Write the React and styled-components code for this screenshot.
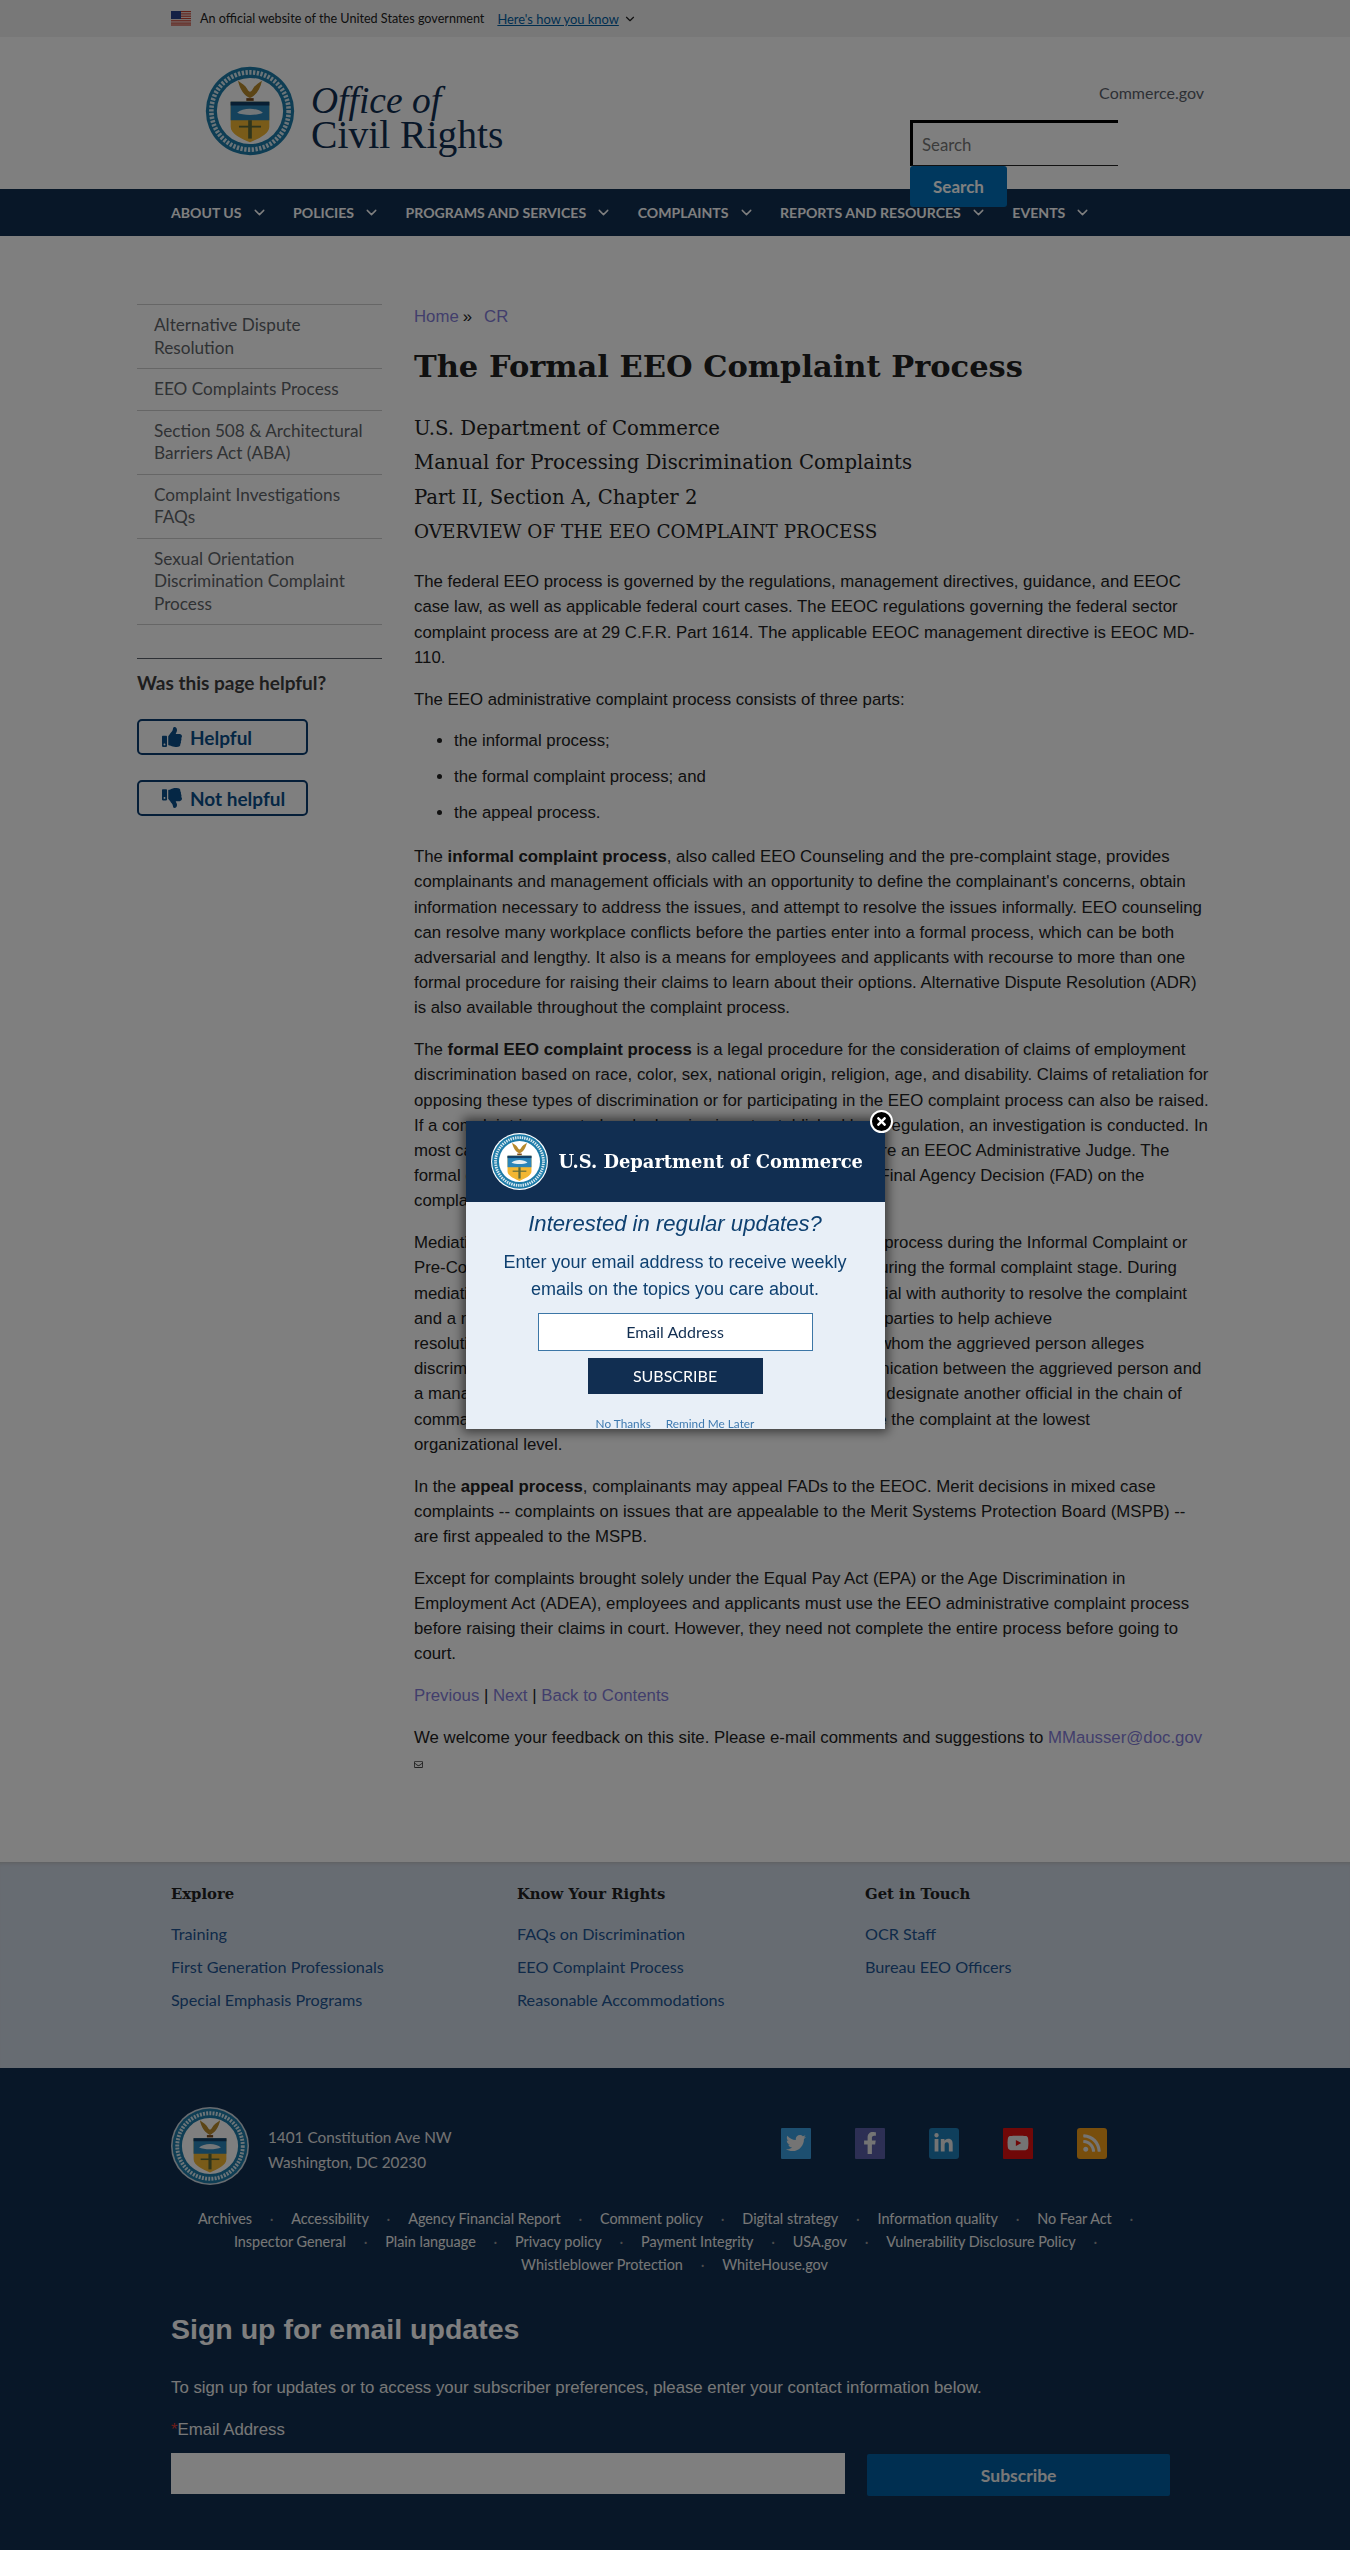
import React from "react";
import styled, { createGlobalStyle } from "styled-components";
import { ChevronDown } from "lucide-react";
import { FaThumbsUp, FaThumbsDown, FaTwitter, FaFacebookF, FaLinkedinIn, FaYoutube, FaRss, FaTimes, FaRegEnvelope } from "react-icons/fa";

const SANS = `Lato, "Noto Sans", sans-serif`;
const SERIF = `"DejaVu Serif", "Liberation Serif", serif`;
const BODY = `"Liberation Sans", Arial, sans-serif`;

const Global = createGlobalStyle`
  html, body { margin: 0; padding: 0; background: #fff; }
  * { box-sizing: border-box; }
  a { text-decoration: none; color: inherit; }
`;

const Page = styled.div`position: relative; width: 1350px; font-family: ${BODY}; color: #212121;`;

const GovBanner = styled.div`
  height: 37px; background: #f1f1f1; padding-left: 171px;
  display: flex; align-items: center; font-family: ${SANS}; font-size: 12.6px; color: #212121;
`;
const BannerText = styled.span`margin-left: 9px;`;
const BannerLink = styled.a`margin-left: 13px; font-size: 12.9px; color: #005ea2; text-decoration: underline;`;
const BannerChevron = styled(ChevronDown)`margin-left: 4px; color: #212121;`;

const Header = styled.header`height: 152px; background: #fff; display: flex; justify-content: space-between; padding: 28px 146px 0 204px;`;
const Logo = styled.div`display: flex; align-items: center; gap: 15px; height: 92px;`;
const LogoText = styled.div`font-family: "Liberation Serif", serif; color: #112e51; font-size: 39.6px; line-height: 34px; padding-top: 14px;`;
const LogoOffice = styled.div`font-style: italic; font-size: 37.5px;`;
const HeaderRight = styled.div`width: 294px; display: flex; flex-direction: column; position: relative; z-index: 2;`;
const CommerceLink = styled.a`flex: none; align-self: flex-end; font-family: ${SANS}; font-size: 16px; color: #5b616b; line-height: 20px; margin-top: 18px;`;
const SearchInput = styled.div`
  flex: none; width: 208px; height: 46px; margin-top: 17px; border-top: 3px solid #000; border-left: 3px solid #000; border-bottom: 1px solid #222;
  padding-left: 9px; display: flex; align-items: center; font-family: ${SANS}; font-size: 16.8px; color: #777;
`;
const SearchButton = styled.button`
  flex: none; width: 97px; height: 41px; border: 0; border-radius: 3px; background: #0071bc; color: #fff;
  font-family: ${SANS}; font-weight: 700; font-size: 17px; padding: 0;
`;

const Nav = styled.nav`height: 47px; background: #112e51; display: flex; align-items: center; padding-left: 171px;`;
const NavItem = styled.a`
  display: flex; align-items: center; margin-right: 25.5px; font-family: ${SANS}; font-weight: 700; font-size: 14.1px; color: #fff;
  svg { margin-left: 9px; }
`;

const Main = styled.main`display: flex; gap: 32px; padding: 68px 140px 0 137px; background: #fff; height: 1626px;`;
const Sidebar = styled.aside`width: 245px; flex: none;`;
const SideList = styled.ul`list-style: none; margin: 0; padding: 0; border-top: 1px solid #ccc;`;
const SideItem = styled.li`
  border-bottom: 1px solid #ccc; padding: 9px 16px 9px 17px; font-family: ${SANS}; font-size: 17.2px; line-height: 22.5px; color: #5f6469;
`;
const Helpful = styled.div`margin-top: 33px; border-top: 1px solid #5b616b; padding-top: 11px;`;
const HelpfulTitle = styled.div`font-family: ${SANS}; font-weight: 700; font-size: 19px; line-height: 26px; color: #3d3d3d;`;
const HelpButton = styled.button`
  display: flex; align-items: center; gap: 8px; width: 171px; height: 36px; margin-top: ${p => p.$top}px; padding: 0 0 0 23px;
  background: #fff; border: 2px solid #0b3d70; border-radius: 5px; color: #0b4f8a;
  font-family: ${SANS}; font-weight: 700; font-size: 19px;
`;

const Content = styled.div`width: 796px; flex: none;`;
const Crumbs = styled.div`font-size: 16.8px; line-height: 24px; padding-top: 1px; color: #212121;`;
const Link = styled.a`color: #847dd8;`;
const CrumbSep = styled.span`margin: 0 12px 0 4px;`;
const Title = styled.h1`font-family: ${SERIF}; font-weight: 700; font-size: 30.5px; line-height: 46px; margin: 14px 0 23px; color: #212121;`;
const Sub = styled.div`font-family: ${SERIF}; font-size: ${p => p.$size || 19.7}px; line-height: 34.3px; color: #212121;`;
const SubGroup = styled.div`margin-bottom: 20px;`;
const P = styled.p`font-size: 16.8px; line-height: 25.2px; margin: 0 0 16.6px;`;
const UL = styled.ul`margin: 0 0 19px; padding: 0 0 0 40px;`;
const LI = styled.li`font-size: 16.8px; line-height: 25.2px; margin-bottom: 10.6px;`;
const MailMark = styled(FaRegEnvelope)`display: block; margin-top: -7px; color: #444;`;

const FooterTop = styled.div`height: 206px; background: #cfd9e5; padding: 20px 0 0 171px; display: grid; grid-template-columns: 346px 348px 1fr; box-shadow: inset 0 4px 4px -3px #bbb;`;
const FootHead = styled.div`font-family: ${SERIF}; font-weight: 700; font-size: 14.8px; line-height: 24px; color: #212121; margin-bottom: 11px;`;
const FootLink = styled.a`display: block; font-family: ${SANS}; font-size: 16.2px; line-height: 33.2px; color: #205493;`;

const FooterDark = styled.footer`height: 482px; background: #112e51; padding: 39px 180px 0 171px; color: #f1f1f1;`;
const ContactRow = styled.div`display: flex; align-items: center;`;
const Address = styled.div`margin-left: 19px; padding-top: 7px; font-family: ${SANS}; font-size: 15.3px; line-height: 24.5px; color: #e6e6e6; width: 512.5px;`;
const Socials = styled.div`display: flex; gap: 44px; margin-top: -6px;`;
const Social = styled.a`
  width: 30px; height: 31px; background: ${p => p.$bg}; border-radius: ${p => p.$r || 1}px; color: #e8e8e8;
  display: flex; align-items: center; justify-content: center; font-size: ${p => p.$fs || 20}px;
`;
const FootLinks = styled.div`margin: 22px -9px 0 -1px; text-align: center; font-family: ${SANS}; font-size: 14.4px; line-height: 23px; color: #eee;`;
const Dot = styled.span`margin: 0 17.8px; color: #999;`;
const SignTitle = styled.h2`font-weight: 700; font-size: 28.5px; line-height: 40px; margin: 33px 0 0; color: #fff; font-family: ${BODY};`;
const SignText = styled.p`font-size: 16.8px; line-height: 25px; margin: 26px 0 0; color: #eee;`;
const SignLabel = styled.div`font-size: 16.8px; line-height: 25px; margin-top: 17px; color: #eee;`;
const Req = styled.span`color: #d83933;`;
const SignRow = styled.div`display: flex; gap: 22px; margin-top: 11px;`;
const SignInput = styled.div`width: 675px; height: 41px; background: #fff;`;
const SignButton = styled.button`
  width: 303px; height: 42px; margin-top: 1px; border: 0; border-radius: 2px; background: #005ea2; color: #f0f0f0;
  font-family: ${SANS}; font-weight: 700; font-size: 17.5px;
`;

const Overlay = styled.div`position: fixed; inset: 0; background: rgba(0,0,0,.5); display: flex; align-items: center; justify-content: center; z-index: 10;`;
const Modal = styled.div`position: relative; width: 419px; height: 308px; background: #e8eff7; box-shadow: 0 0 10px 3px rgba(0,0,0,.55); text-align: center; color: #0e4070;`;
const ModalClip = styled.div`height: 100%; overflow: hidden;`;
const ModalHead = styled.div`height: 81px; background: #112e51; display: flex; align-items: center; padding-left: 25px; gap: 11px;`;
const ModalBrand = styled.div`font-family: ${SERIF}; font-weight: 700; font-size: 17.9px; color: #fff; white-space: nowrap;`;
const ModalH = styled.div`font-style: italic; font-size: 22.1px; line-height: 30px; margin-top: 7px;`;
const ModalP = styled.div`font-size: 18px; line-height: 27px; margin-top: 10px;`;
const ModalInput = styled.div`
  width: 275px; height: 38px; margin: 10px auto 0; background: #fff; border: 1px solid #3c76a6; color: #112e51;
  font-family: ${SANS}; font-size: 16px; line-height: 36px;
`;
const ModalSubmit = styled.div`
  width: 175px; height: 36px; margin: 7px auto 0; background: #112e51; color: #fff;
  font-family: ${SANS}; font-size: 16px; line-height: 36px;
`;
const ModalLinks = styled.div`display: flex; justify-content: center; gap: 15px; margin: 22px 0 0 0; font-family: ${SANS}; font-size: 11.8px; line-height: 16px; color: #3f7ab0;`;
const Close = styled.button`
  position: absolute; right: -8px; top: -11px; width: 23px; height: 23px; border-radius: 50%; padding: 0;
  background: #000; border: 2px solid #fff; color: #fff; display: flex; align-items: center; justify-content: center; font-size: 13px;
`;

function Flag() {
  return (
    <svg width="20" height="15" viewBox="0 0 20 15" style={{ flex: "none" }}>
      <rect width="20" height="15" fill="#f3f3f3" />
      {[0, 2.3, 4.6, 6.9, 9.2, 11.5, 13.4].map(y => <rect key={y} y={y} width="20" height="1.2" fill="#c8402f" />)}
      <rect width="10" height="8" fill="#27408b" />
    </svg>
  );
}

function Seal({ size = 90, dim }) {
  return (
    <svg width={size} height={size} viewBox="0 0 100 100" style={{ flex: "none", display: "block" }}>
      <circle cx="50" cy="50" r="50" fill={dim ? "#cfd8e0" : "#fff"} />
      <circle cx="50" cy="50" r="48" fill="#1d7ba8" />
      <circle cx="50" cy="50" r="36" fill="#fff" />
      <circle cx="50" cy="50" r="42" fill="none" stroke="#d7e8f0" strokeWidth="5" strokeDasharray="2.5 1.6" />
      <path d="M50 36C44 33 39 27 37 17c4 3 8 5 10 9 1 2 2 3 3 3s2-1 3-3c2-4 6-6 10-9-2 10-7 16-13 19z" fill="#b88a2c" />
      <path d="M46 36h8v3h-8z" fill="#7b4a1c" />
      <path d="M29 40h42v27c0 8-12 13-21 17-9-4-21-9-21-17z" fill="#f2b632" />
      <path d="M29 40h42v20H29z" fill="#2b84b8" />
      <path d="M29 40h42v4H29z" fill="#123f66" />
      <path d="M36 52c6-6 22-6 28 0-6 3-22 3-28 0z" fill="#e7eef3" />
      <path d="M48 60h4v20h-4z" fill="#5d6a3a" />
      <path d="M38 66h24v2H38z" fill="#5d6a3a" />
    </svg>
  );
}

const nav = ["ABOUT US", "POLICIES", "PROGRAMS AND SERVICES", "COMPLAINTS", "REPORTS AND RESOURCES", "EVENTS"];
const side = [
  "Alternative Dispute Resolution",
  "EEO Complaints Process",
  "Section 508 & Architectural Barriers Act (ABA)",
  "Complaint Investigations FAQs",
  "Sexual Orientation Discrimination Complaint Process",
];
const links1 = ["Archives", "Accessibility", "Agency Financial Report", "Comment policy", "Digital strategy", "Information quality", "No Fear Act"];
const links2 = ["Inspector General", "Plain language", "Privacy policy", "Payment Integrity", "USA.gov", "Vulnerability Disclosure Policy"];
const links3 = ["Whistleblower Protection", "WhiteHouse.gov"];

const FootLine = ({ items, trailing }) => (
  <div>
    {items.map((l, i) => (
      <React.Fragment key={l}>
        <a>{l}</a>
        {(i < items.length - 1 || trailing) && <Dot>·</Dot>}
      </React.Fragment>
    ))}
  </div>
);

export default function App() {
  return (
    <Page>
      <Global />
      <GovBanner>
        <Flag />
        <BannerText>An official website of the United States government</BannerText>
        <BannerLink>Here's how you know</BannerLink>
        <BannerChevron size={14} />
      </GovBanner>
      <Header>
        <Logo>
          <Seal size={92} />
          <LogoText>
            <LogoOffice>Office of</LogoOffice>
            <div>Civil Rights</div>
          </LogoText>
        </Logo>
        <HeaderRight>
          <CommerceLink>Commerce.gov</CommerceLink>
          <SearchInput>Search</SearchInput>
          <SearchButton>Search</SearchButton>
        </HeaderRight>
      </Header>
      <Nav>
        {nav.map(n => (
          <NavItem key={n}>{n}<ChevronDown size={17} /></NavItem>
        ))}
      </Nav>
      <Main>
        <Sidebar>
          <SideList>
            {side.map(s => <SideItem key={s}>{s}</SideItem>)}
          </SideList>
          <Helpful>
            <HelpfulTitle>Was this page helpful?</HelpfulTitle>
            <HelpButton $top={23}><FaThumbsUp size={20} />Helpful</HelpButton>
            <HelpButton $top={25}><FaThumbsDown size={20} />Not helpful</HelpButton>
          </Helpful>
        </Sidebar>
        <Content>
          <Crumbs><Link>Home</Link><CrumbSep>»</CrumbSep><Link>CR</Link></Crumbs>
          <Title>The Formal EEO Complaint Process</Title>
          <SubGroup>
            <Sub>U.S. Department of Commerce</Sub>
            <Sub>Manual for Processing Discrimination Complaints</Sub>
            <Sub>Part II, Section A, Chapter 2</Sub>
            <Sub $size={18.4}>OVERVIEW OF THE EEO COMPLAINT PROCESS</Sub>
          </SubGroup>
          <P>The federal EEO process is governed by the regulations, management directives, guidance, and EEOC case law, as well as applicable federal court cases. The EEOC regulations governing the federal sector complaint process are at 29 C.F.R. Part 1614. The applicable EEOC management directive is EEOC MD-110.</P>
          <P>The EEO administrative complaint process consists of three parts:</P>
          <UL>
            <LI>the informal process;</LI>
            <LI>the formal complaint process; and</LI>
            <LI>the appeal process.</LI>
          </UL>
          <P>The <b>informal complaint process</b>, also called EEO Counseling and the pre-complaint stage, provides complainants and management officials with an opportunity to define the complainant's concerns, obtain information necessary to address the issues, and attempt to resolve the issues informally. EEO counseling can resolve many workplace conflicts before the parties enter into a formal process, which can be both adversarial and lengthy. It also is a means for employees and applicants with recourse to more than one formal procedure for raising their claims to learn about their options. Alternative Dispute Resolution (ADR) is also available throughout the complaint process.</P>
          <P>The <b>formal EEO complaint process</b> is a legal procedure for the consideration of claims of employment discrimination based on race, color, sex, national origin, religion, age, and disability. Claims of retaliation for opposing these types of discrimination or for participating in the EEO complaint process can also be raised.<br />If a complaint is accepted and a hearing is not established by a regulation, an investigation is conducted. In<br />most cases, the complainants may then request a hearing before an EEOC Administrative Judge. The<br />formal complaint process ends only when the agency issues a Final Agency Decision (FAD) on the<br />complaint.</P>
          <P>Mediation is a form of ADR that can be used at any point in the process during the Informal Complaint or<br />Pre-Complaint stage, and may also be offered by the agency during the formal complaint stage. During<br />mediation, the parties meet with a mediator and an agency official with authority to resolve the complaint<br />and a neutral third party facilitates communication between the parties to help achieve<br />resolution. An agency official who is not the same person from whom the aggrieved person alleges<br />discrimination serves at this stage to facilitate the open communication between the aggrieved person and<br />a management official with authority. An agency may choose to designate another official in the chain of<br />command with sufficient authority to help both parties to resolve the complaint at the lowest<br />organizational level.</P>
          <P>In the <b>appeal process</b>, complainants may appeal FADs to the EEOC. Merit decisions in mixed case complaints -- complaints on issues that are appealable to the Merit Systems Protection Board (MSPB) -- are first appealed to the MSPB.</P>
          <P>Except for complaints brought solely under the Equal Pay Act (EPA) or the Age Discrimination in Employment Act (ADEA), employees and applicants must use the EEO administrative complaint process before raising their claims in court. However, they need not complete the entire process before going to court.</P>
          <P><Link>Previous</Link> | <Link>Next</Link> | <Link>Back to Contents</Link></P>
          <P>We welcome your feedback on this site. Please e-mail comments and suggestions to <Link>MMausser@doc.gov</Link></P>
          <MailMark size={9} />
        </Content>
      </Main>
      <FooterTop>
        <div>
          <FootHead>Explore</FootHead>
          <FootLink>Training</FootLink>
          <FootLink>First Generation Professionals</FootLink>
          <FootLink>Special Emphasis Programs</FootLink>
        </div>
        <div>
          <FootHead>Know Your Rights</FootHead>
          <FootLink>FAQs on Discrimination</FootLink>
          <FootLink>EEO Complaint Process</FootLink>
          <FootLink>Reasonable Accommodations</FootLink>
        </div>
        <div>
          <FootHead>Get in Touch</FootHead>
          <FootLink>OCR Staff</FootLink>
          <FootLink>Bureau EEO Officers</FootLink>
        </div>
      </FooterTop>
      <FooterDark>
        <ContactRow>
          <Seal size={78} dim />
          <Address>1401 Constitution Ave NW<br />Washington, DC 20230</Address>
          <Socials>
            <Social $bg="#3a9fe0"><FaTwitter /></Social>
            <Social $bg="#5a5fa8" $fs={22}><FaFacebookF /></Social>
            <Social $bg="#1f7fb8" $r={3} $fs={21}><FaLinkedinIn /></Social>
            <Social $bg="#e01010" $fs={22}><FaYoutube /></Social>
            <Social $bg="#f09c18" $r={3}><FaRss /></Social>
          </Socials>
        </ContactRow>
        <FootLinks>
          <FootLine items={links1} trailing />
          <FootLine items={links2} trailing />
          <FootLine items={links3} />
        </FootLinks>
        <SignTitle>Sign up for email updates</SignTitle>
        <SignText>To sign up for updates or to access your subscriber preferences, please enter your contact information below.</SignText>
        <SignLabel><Req>*</Req>Email Address</SignLabel>
        <SignRow>
          <SignInput />
          <SignButton>Subscribe</SignButton>
        </SignRow>
      </FooterDark>
      <Overlay>
        <Modal>
          <ModalClip>
            <ModalHead>
              <Seal size={57} />
              <ModalBrand>U.S. Department of Commerce</ModalBrand>
            </ModalHead>
            <ModalH>Interested in regular updates?</ModalH>
            <ModalP>Enter your email address to receive weekly<br />emails on the topics you care about.</ModalP>
            <ModalInput>Email Address</ModalInput>
            <ModalSubmit>SUBSCRIBE</ModalSubmit>
            <ModalLinks><a>No Thanks</a><a>Remind Me Later</a></ModalLinks>
          </ModalClip>
          <Close aria-label="Close"><FaTimes /></Close>
        </Modal>
      </Overlay>
    </Page>
  );
}
